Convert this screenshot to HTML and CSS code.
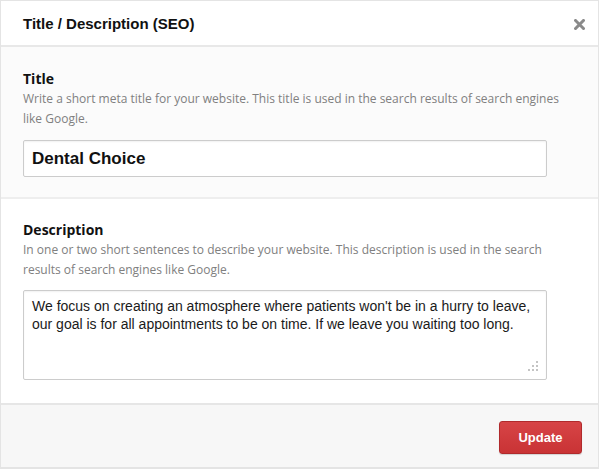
FILE: index.html
```html
<!DOCTYPE html>
<html lang="en">
<head>
<meta charset="utf-8">
<title>Title / Description (SEO)</title>
<link rel="stylesheet" href="styles.css">
</head>
<body>
<div class="modal">
  <div class="modal-header">
    <h1 class="modal-title">Title / Description (SEO)</h1>
    <button class="close" type="button" aria-label="Close">
      <svg width="11" height="11" viewBox="0 0 11 11"><path d="M1.5 1.5 L9.5 9.5 M9.5 1.5 L1.5 9.5" stroke="#8a8a8a" stroke-width="3" stroke-linecap="square"/></svg>
    </button>
  </div>
  <div class="section section-title">
    <label class="field-label" for="seo-title">Title</label>
    <p class="help">Write a short meta title for your website. This title is used in the search results of search engines like Google.</p>
    <input id="seo-title" class="text-input" type="text" value="Dental Choice">
  </div>
  <div class="section section-desc">
    <label class="field-label" for="seo-desc">Description</label>
    <p class="help">In one or two short sentences to describe your website. This description is used in the search results of search engines like Google.</p>
    <div class="textarea-wrap">
      <textarea id="seo-desc" class="text-area">We focus on creating an atmosphere where patients won't be in a hurry to leave, our goal is for all appointments to be on time. If we leave you waiting too long.</textarea>
      <svg class="grip" width="12" height="12" viewBox="0 0 12 12">
        <rect x="9" y="1" width="2" height="2" fill="#c4c4c4"/>
        <rect x="5" y="5" width="2" height="2" fill="#c4c4c4"/>
        <rect x="9" y="5" width="2" height="2" fill="#c4c4c4"/>
        <rect x="1" y="9" width="2" height="2" fill="#c4c4c4"/>
        <rect x="5" y="9" width="2" height="2" fill="#c4c4c4"/>
        <rect x="9" y="9" width="2" height="2" fill="#c4c4c4"/>
      </svg>
    </div>
  </div>
  <div class="modal-footer">
    <button class="btn-update" type="button">Update</button>
  </div>
</div>
</body>
</html>
```
FILE: styles.css
```css
* { box-sizing: border-box; }

html, body {
  margin: 0;
  padding: 0;
  background: #ffffff;
}

.modal {
  width: 599px;
  height: 469px;
  border: 1px solid #e4e4e4;
  border-bottom-width: 2px;
  display: flex;
  flex-direction: column;
  background: #ffffff;
}

.modal-header {
  height: 46px;
  flex: none;
  display: flex;
  align-items: center;
  justify-content: space-between;
  padding: 1px 13px 0 22px;
  border-bottom: 2px solid #e8e8e8;
  background: #ffffff;
}

.modal-title {
  margin: 0;
  font-family: "Liberation Sans", Arial, sans-serif;
  font-weight: bold;
  font-size: 15px;
  color: #111111;
}

.close {
  border: 0;
  background: transparent;
  padding: 0;
  width: 11px;
  height: 11px;
  display: flex;
  margin-top: 2px;
}

.section {
  padding: 22px 22px 20px;
  flex: none;
}

.section-title {
  background: #fbfbfb;
  border-bottom: 2px solid #eeeeee;
}

.section-desc {
  background: #ffffff;
  padding-top: 21px;
  padding-bottom: 23px;
  border-bottom: 2px solid #e6e6e6;
}

.field-label {
  display: block;
  font-family: "Open Sans", sans-serif;
  font-weight: bold;
  font-size: 14px;
  line-height: 20px;
  color: #111111;
}

.help {
  margin: 0;
  font-family: "Open Sans", sans-serif;
  font-size: 12px;
  line-height: 20px;
  color: #808080;
}

.text-input {
  display: block;
  margin-top: 11px;
  width: 524px;
  height: 37px;
  border: 1px solid #cccccc;
  border-radius: 2px;
  padding: 0 8px;
  background: #ffffff;
  box-shadow: inset 0 1px 2px rgba(0,0,0,0.06);
  font-family: "Liberation Sans", Arial, sans-serif;
  font-weight: bold;
  font-size: 17px;
  color: #111111;
  outline: none;
}

.textarea-wrap {
  position: relative;
  margin-top: 10px;
  width: 524px;
  height: 90px;
}

.text-area {
  display: block;
  width: 100%;
  height: 100%;
  resize: none;
  border: 1px solid #cccccc;
  border-radius: 2px;
  padding: 6px 12px 6px 8px;
  background: #ffffff;
  box-shadow: inset 0 1px 2px rgba(0,0,0,0.06);
  font-family: "Liberation Sans", Arial, sans-serif;
  font-size: 14px;
  line-height: 18px;
  color: #1a1a1a;
  outline: none;
  overflow: hidden;
}

.grip {
  position: absolute;
  right: 8px;
  bottom: 8px;
}

.modal-footer {
  flex: 1;
  background: #f7f7f7;
  display: flex;
  justify-content: flex-end;
  align-items: flex-start;
  padding: 16px 16px 0 0;
}

.btn-update {
  width: 83px;
  height: 33px;
  border: 1px solid #b02a2c;
  border-radius: 3px;
  background: linear-gradient(#d74446, #c93335);
  box-shadow: 0 1px 1px rgba(0,0,0,0.15);
  color: #ffffff;
  font-family: "Liberation Sans", Arial, sans-serif;
  font-weight: bold;
  font-size: 13px;
  padding: 0;
}
```
